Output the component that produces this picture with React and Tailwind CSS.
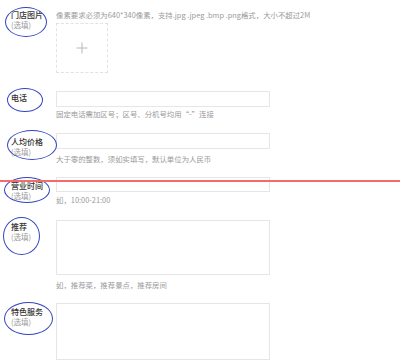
import React from "react";

const font = { fontFamily: '"Noto Sans CJK SC", "Noto Sans", sans-serif' };

const Label = ({ title, optional, className = "" }) => (
  <div className={`w-[56px] shrink-0 pl-[11px] ${className}`}>
    <div className="text-[8px] leading-[10px] text-[#333] font-medium">{title}</div>
    {optional && <div className="text-[7.5px] leading-[10px] text-[#999]">(选填)</div>}
  </div>
);

const Hint = ({ children, className = "" }) => (
  <div className={`text-[7.4px] leading-[10px] text-[#9a9a9a] whitespace-nowrap ${className}`}>{children}</div>
);

const ellipses = [
  "left-[5px] top-[7px] w-[42px] h-[30px]",
  "left-[7px] top-[88px] w-[36px] h-[24px]",
  "left-[7px] top-[130px] w-[50px] h-[30px]",
  "left-[4px] top-[177px] w-[46px] h-[26px]",
  "left-[3px] top-[217px] w-[37px] h-[38px]",
  "left-[4px] top-[302px] w-[49px] h-[33px]",
];

export default function App() {
  return (
    <div className="relative w-[400px] h-[362px] bg-white overflow-hidden" style={font}>
      <div className="flex flex-col">
        {/* store picture */}
        <div className="flex pt-[10px]">
          <Label title="门店图片" optional />
          <div className="flex flex-col">
            <Hint>像素要求必须为640*340像素，支持.jpg .jpeg .bmp .png格式，大小不超过2M</Hint>
            <div className="mt-[3px] w-[52px] h-[50px] border border-dashed border-[#e2e2e2] flex items-center justify-center">
              <svg width="12" height="12" viewBox="0 0 12 12">
                <path d="M6 0.5v11M0.5 6h11" stroke="#b8b8b8" strokeWidth="1" />
              </svg>
            </div>
          </div>
        </div>

        {/* phone */}
        <div className="flex mt-[18px]">
          <Label title="电话" className="pt-[2px]" />
          <div className="flex flex-col">
            <div className="w-[214px] h-[16px] border border-[#e6e6e6]" />
            <Hint className="mt-[2px]">固定电话需加区号；区号、分机号均用“-”连接</Hint>
          </div>
        </div>

        {/* price */}
        <div className="flex mt-[14px]">
          <Label title="人均价格" optional className="pt-[4px]" />
          <div className="flex flex-col">
            <div className="w-[214px] h-[16px] border border-[#e6e6e6]" />
            <Hint className="mt-[5px]">大于零的整数，须如实填写，默认单位为人民币</Hint>
          </div>
        </div>

        {/* hours */}
        <div className="flex mt-[13px]">
          <Label title="营业时间" optional className="pt-[4px]" />
          <div className="flex flex-col">
            <div className="w-[214px] h-[15px] border border-[#e6e6e6]" />
            <Hint className="mt-[3px]">如，10:00-21:00</Hint>
          </div>
        </div>

        {/* recommend */}
        <div className="flex mt-[15px]">
          <Label title="推荐" optional className="pt-[2px]" />
          <div className="flex flex-col">
            <div className="w-[214px] h-[55px] border border-[#e6e6e6]" />
            <Hint className="mt-[5px]">如，推荐菜，推荐景点，推荐房间</Hint>
          </div>
        </div>

        {/* special service */}
        <div className="flex mt-[13px]">
          <Label title="特色服务" optional className="pt-[4px]" />
          <div className="w-[214px] h-[57px] border border-[#e6e6e6]" />
        </div>
      </div>

      {ellipses.map((c, i) => (
        <div key={i} className={`absolute ${c} rounded-[50%] border-[1.5px] border-[#3545c0]`} />
      ))}
      <div className="absolute left-0 top-[180px] w-[400px] h-[2px] bg-[#f36b6b]" />
    </div>
  );
}
